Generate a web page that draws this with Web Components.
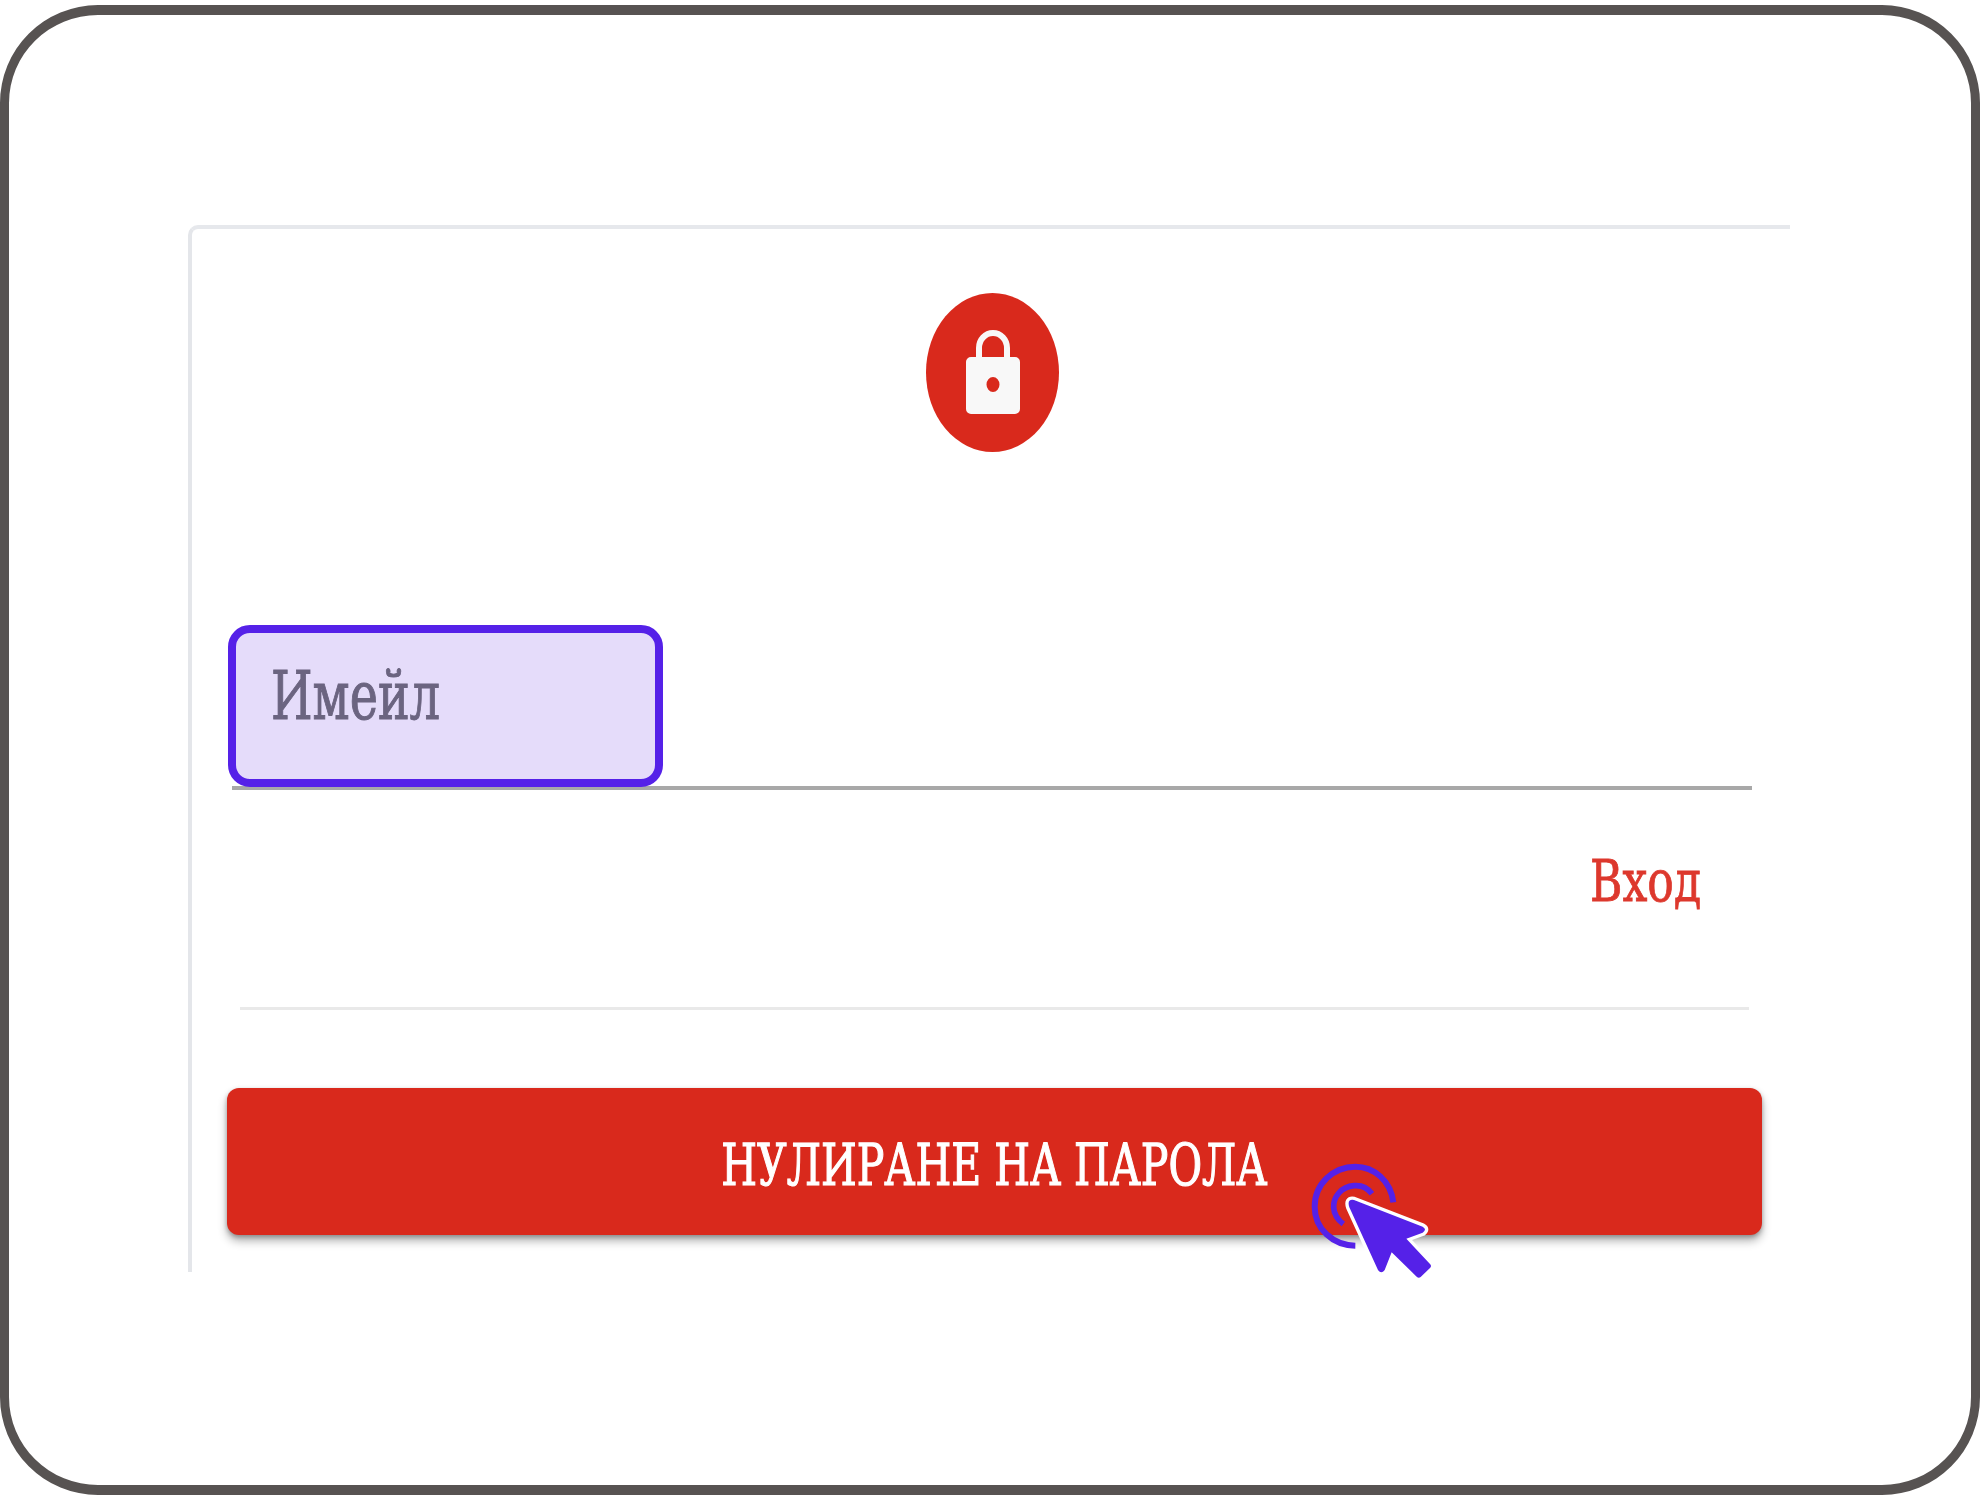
<!DOCTYPE html>
<html lang="bg">
<head>
<meta charset="utf-8">
<title>Нулиране на парола</title>
<style>
    html, body { margin: 0; background: #ffffff; }
</style>
</head>
<body>
<reset-frame>
    <reset-card>
        <lock-avatar></lock-avatar>
        <email-field>Имейл</email-field>
        <login-link>Вход</login-link>
        <card-divider></card-divider>
        <reset-button>НУЛИРАНЕ НА ПАРОЛА</reset-button>
        <click-cursor></click-cursor>
    </reset-card>
</reset-frame>

<script>
const slabFont = `"DejaVu Serif", "Liberation Serif", serif`;

class ResetFrame extends HTMLElement {
    constructor() {
        super();
        this.attachShadow({ mode: "open" });
        this.shadowRoot.innerHTML = `
            <style>
                :host {
                    display: block;
                    box-sizing: border-box;
                    width: 1980px;
                    height: 1490px;
                    margin-top: 5px;
                    padding: 210px 183px 0 179px;
                    border-style: solid;
                    border-color: #575352;
                    border-width: 10px 9px;
                    border-radius: 98px;
                    background: #ffffff;
                }
            </style>
            <slot></slot>
        `;
    }
}

class ResetCard extends HTMLElement {
    constructor() {
        super();
        this.attachShadow({ mode: "open" });
        this.shadowRoot.innerHTML = `
            <style>
                :host {
                    display: block;
                    position: relative;
                    box-sizing: border-box;
                    width: 1602px;
                    height: 1047px;
                    border-left: 4px solid #e4e6ea;
                    border-top: 4px solid #e6e8ec;
                    border-top-left-radius: 10px;
                    font-family: ${slabFont};
                }
            </style>
            <slot></slot>
        `;
    }
}

class LockAvatar extends HTMLElement {
    constructor() {
        super();
        this.attachShadow({ mode: "open" });
        this.shadowRoot.innerHTML = `
            <style>
                :host {
                    display: flex;
                    align-items: center;
                    justify-content: center;
                    width: 133px;
                    height: 159px;
                    margin: 64px 0 0 734px;
                    border-radius: 50%;
                    background: #d9291c;
                    filter: blur(0.7px);
                }
                svg { display: block; margin-top: -1px; }
            </style>
            <svg width="56" height="86" viewBox="0 0 56 86">
                <path d="M14 30V19a14 15 0 0 1 28 0V30" fill="none" stroke="#f8f8f8" stroke-width="6"/>
                <path fill="#f8f8f8" fill-rule="evenodd" d="M6 28H50a5 5 0 0 1 5 5V80a5 5 0 0 1-5 5H6a5 5 0 0 1-5-5V33a5 5 0 0 1 5-5ZM28 48a6.5 7.5 0 1 0 0 15a6.5 7.5 0 1 0 0-15Z"/>
            </svg>
        `;
    }
}

class EmailField extends HTMLElement {
    constructor() {
        super();
        this.attachShadow({ mode: "open" });
        this.shadowRoot.innerHTML = `
            <style>
                :host {
                    display: block;
                    box-sizing: border-box;
                    width: 1520px;
                    height: 165px;
                    margin: 173px 0 0 40px;
                    border-bottom: 4px solid #a8a8a8;
                }
                .highlight {
                    box-sizing: border-box;
                    width: 435px;
                    height: 162px;
                    margin-left: -4px;
                    padding: 23px 0 0 35px;
                    border: 8px solid #5521e8;
                    border-radius: 22px;
                    background: #e5dcfa;
                    color: #6b6480;
                    font-size: 68px;
                    font-stretch: condensed;
                    line-height: 80px;
                }
                span {
                    display: inline-block;
                    -webkit-text-stroke: 1px #6b6480;
                    filter: blur(0.7px);
                    transform-origin: left;
                    transform: scaleX(0.78);
                }
            </style>
            <div class="highlight"><span><slot></slot></span></div>
        `;
    }
}

class LoginLink extends HTMLElement {
    constructor() {
        super();
        this.attachShadow({ mode: "open" });
        this.shadowRoot.innerHTML = `
            <style>
                :host {
                    display: block;
                    width: 1509px;
                    margin-top: 56px;
                    text-align: right;
                    color: #dd382d;
                    font-size: 57px;
                    font-stretch: condensed;
                    line-height: 70px;
                }
                span {
                    display: inline-block;
                    -webkit-text-stroke: 0.8px #dd382d;
                    filter: blur(0.6px);
                    transform-origin: right;
                    transform: scaleX(0.86);
                }
            </style>
            <span><slot></slot></span>
        `;
    }
}

class CardDivider extends HTMLElement {
    constructor() {
        super();
        this.attachShadow({ mode: "open" });
        this.shadowRoot.innerHTML = `
            <style>
                :host {
                    display: block;
                    width: 1509px;
                    height: 3px;
                    margin: 91px 0 0 48px;
                    background: #e9e9e9;
                }
            </style>
        `;
    }
}

class ResetButton extends HTMLElement {
    constructor() {
        super();
        this.attachShadow({ mode: "open" });
        this.shadowRoot.innerHTML = `
            <style>
                :host {
                    display: flex;
                    align-items: center;
                    justify-content: center;
                    box-sizing: border-box;
                    width: 1535px;
                    height: 147px;
                    margin: 78px 0 0 35px;
                    padding-top: 6px;
                    border-radius: 12px;
                    background: #d9291c;
                    color: #ffffff;
                    font-size: 57px;
                    font-stretch: condensed;
                    box-shadow: 0 6px 10px rgba(0, 0, 0, 0.3), 0 2px 4px rgba(0, 0, 0, 0.25);
                }
                span {
                    display: inline-block;
                    white-space: nowrap;
                    -webkit-text-stroke: 1.2px #ffffff;
                    filter: blur(0.6px);
                    transform: scaleX(0.8);
                }
            </style>
            <span><slot></slot></span>
        `;
    }
}

class ClickCursor extends HTMLElement {
    constructor() {
        super();
        this.attachShadow({ mode: "open" });
        this.shadowRoot.innerHTML = `
            <style>
                :host {
                    display: block;
                    position: absolute;
                    left: 1098px;
                    top: 921px;
                    width: 160px;
                    height: 140px;
                }
                svg { display: block; }
            </style>
            <svg width="160" height="140" viewBox="0 0 480 420">
                <path d="M310 157C302 92 252 50 196 50C130 50 74 102 74 170C74 236 128 286 196 287" fill="none" stroke="#5521e8" stroke-width="18"/>
                <path d="M246 131C232 113 212 105 192 107C154 110 130 140 131 172C132 192 144 210 160 222" fill="none" stroke="#5521e8" stroke-width="17"/>
                <path d="M192 150L398 230Q412 238 398 248L349 266L420 342Q426 348 420 354L392 381Q386 386 380 380L305 307L284 360Q274 374 264 360L178 172Q170 146 192 150Z" fill="#5521e8" stroke="#ffffff" stroke-width="20" stroke-linejoin="round" paint-order="stroke"/>
            </svg>
        `;
    }
}

customElements.define("reset-frame", ResetFrame);
customElements.define("reset-card", ResetCard);
customElements.define("lock-avatar", LockAvatar);
customElements.define("email-field", EmailField);
customElements.define("login-link", LoginLink);
customElements.define("card-divider", CardDivider);
customElements.define("reset-button", ResetButton);
customElements.define("click-cursor", ClickCursor);
</script>
</body>
</html>
